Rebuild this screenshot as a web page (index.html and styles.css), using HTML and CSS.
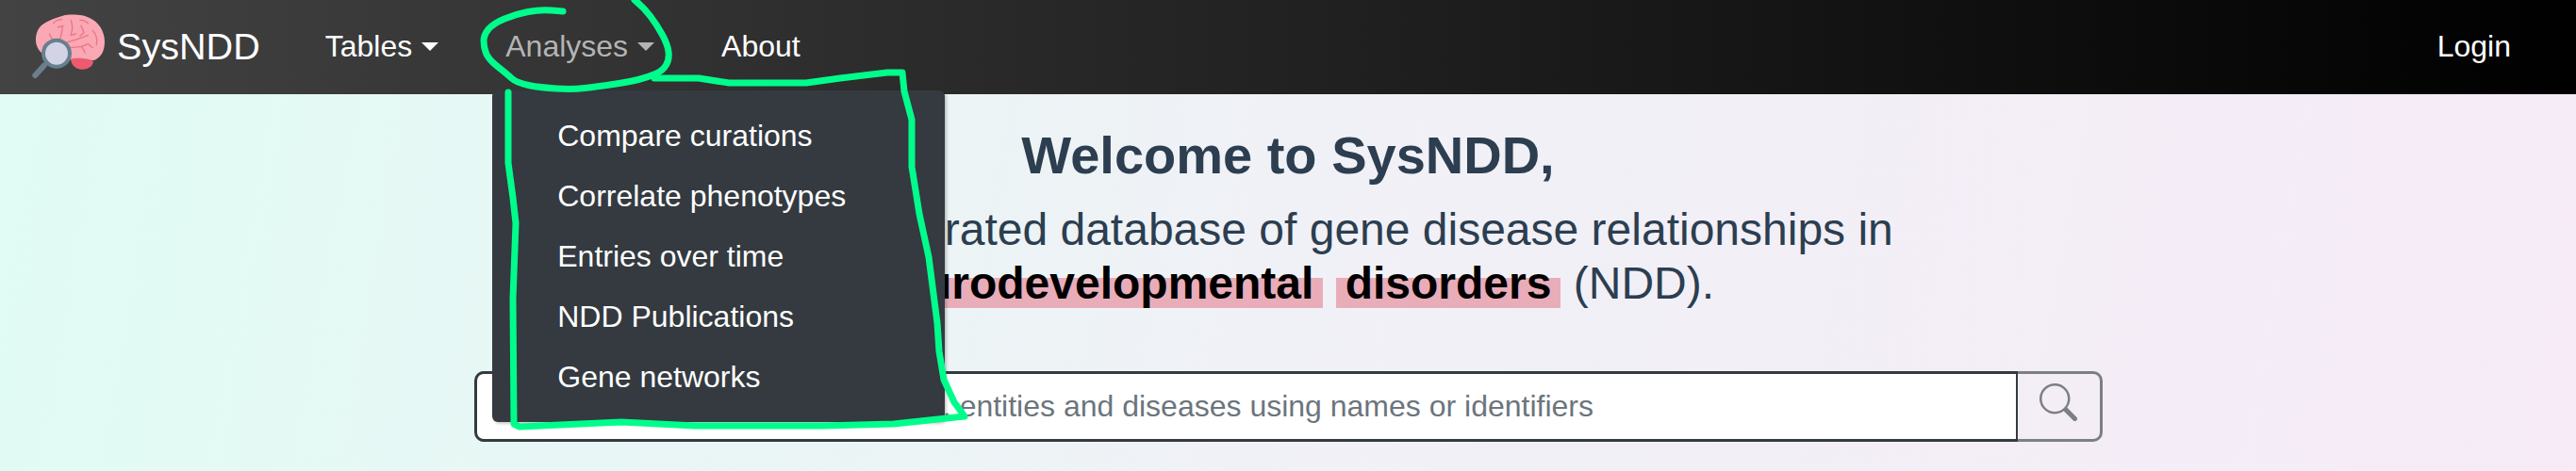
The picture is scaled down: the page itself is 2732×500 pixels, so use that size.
FILE: index.html
```html
<!DOCTYPE html>
<html>
<head>
    <title>SysNDD</title>
    <link rel="stylesheet" href="styles.css">
</head>
<body>
    <nav class="navbar">
        <a class="brand" href="#">
            <svg class="brand-logo" viewBox="0 0 297 270" width="99" height="90">
                <path d="M62 160C40 145 32 115 45 85C55 62 85 50 125 38C150 32 190 34 210 45C240 58 258 90 258 120C258 150 248 170 225 180L150 178L100 180Z" fill="#f9a8b4"/>
                <path d="M150 176C165 172 205 172 222 184C220 200 205 210 185 209C165 208 152 195 150 176Z" fill="#ee5a6f"/>
                <g class="brain-folds">
                    <path d="M95 62C103 52 112 50 122 50"/>
                    <path d="M150 52C158 70 156 85 150 100L166 96"/>
                    <path d="M180 52C190 52 198 55 205 62"/>
                    <path d="M82 96L92 115"/>
                    <path d="M110 75L125 70C122 90 120 100 115 118"/>
                    <path d="M183 70L192 92L180 102"/>
                    <path d="M220 85C232 98 236 112 232 130"/>
                    <path d="M125 126L165 115L205 100"/>
                    <path d="M150 140L185 136L205 128L220 140M185 136L196 156"/>
                </g>
                <path class="lens-handle" d="M66 196L37 228"/>
                <circle class="lens" cx="105" cy="158" r="42"/>
            </svg>
            <span>SysNDD</span>
        </a>
        <a class="nav-link caret" href="#">Tables</a>
        <div class="nav-item">
            <a class="nav-link caret muted" href="#">Analyses</a>
            <ul class="dropdown">
                <li>Compare curations</li>
                <li>Correlate phenotypes</li>
                <li>Entries over time</li>
                <li>NDD Publications</li>
                <li>Gene networks</li>
            </ul>
        </div>
        <a class="nav-link" href="#">About</a>
        <a class="nav-link login" href="#">Login</a>
    </nav>

    <main class="content">
        <h1>Welcome to SysNDD,</h1>
        <p class="lead">the expert curated database of gene disease relationships in<br>
            <mark>neurodevelopmental</mark> <mark>disorders</mark> (NDD).</p>
        <form class="search">
            <input type="text" placeholder="Search the SysNDD-db by genes, entities and diseases using names or identifiers">
            <button type="button">
                <svg viewBox="0 0 16 16" width="40" height="40" fill="#7c7f84">
                    <path d="M11.742 10.344a6.5 6.5 0 1 0-1.397 1.398h-.001c.03.04.062.078.098.115l3.85 3.85a1 1 0 0 0 1.415-1.414l-3.85-3.85a1.007 1.007 0 0 0-.115-.1zM12 6.5a5.5 5.5 0 1 1-11 0 5.5 5.5 0 0 1 11 0z"/>
                </svg>
            </button>
        </form>
    </main>

    <svg class="scribble" width="2732" height="500" viewBox="0 0 2732 500">
        <path d="M597 12L585 11Q573 10 560 12.5Q547 15 535 20Q523 25 518 31Q513 37 513 43.5Q513 50 515.5 56.5Q518 63 527.5 70.5Q537 78 542.5 83Q548 88 560.5 90.5Q573 93 590 94Q607 95 620 93.5Q633 92 650 89.5Q667 87 677 84.5Q687 82 695 78.5Q703 75 706.5 69Q710 63 709 55Q708 47 702.5 37Q697 27 690 17.5Q683 8 673 0"/>
        <path d="M539 98L539 173L544 210L547 237L544 317L545 450L551 453L659 448L737 452L873 452L948 450L1023 442L1012 427L1001 403L996 373L994 343L985 273L975 227L967 177L967 127L959 97L957 77L941 77L891 83L855 88L773 88L741 83L694 83"/>
    </svg>
</body>
</html>
```

FILE: styles.css
```css
* {
    box-sizing: border-box;
}
body {
    margin: 0;
    height: 500px;
    overflow: hidden;
    font-family: "Liberation Sans", Arial, sans-serif;
    background: linear-gradient(100deg, #e0fcf4 0%, #f0f1f6 50%, #f6ebf7 100%);
}
.navbar {
    display: flex;
    align-items: center;
    height: 100px;
    padding: 0 0 2px 25px;
    background: linear-gradient(to right, #434343 0%, #000 100%);
}
.brand {
    display: flex;
    align-items: center;
    margin-right: 69px;
    color: #fff;
    font-size: 39.6px;
    text-decoration: none;
}
.brain-folds {
    fill: none;
    stroke: #ef7484;
    stroke-width: 4;
    stroke-linecap: round;
    stroke-linejoin: round;
}
.lens-handle {
    fill: none;
    stroke: #6b7f8b;
    stroke-width: 18;
    stroke-linecap: round;
}
.lens {
    fill: #d3d3e6;
    stroke: #66808e;
    stroke-width: 12;
}
.nav-item {
    position: relative;
}
.nav-link {
    display: block;
    color: #fff;
    font-size: 32px;
    text-decoration: none;
}
.nav-link.muted {
    color: #b4b4b4;
}
.caret {
    margin-right: 71px;
}
.caret::after {
    content: "";
    display: inline-block;
    margin-left: 10px;
    vertical-align: 6px;
    border-top: 9px solid;
    border-left: 9px solid transparent;
    border-right: 9px solid transparent;
}
.login {
    margin-left: auto;
    margin-right: 69px;
}
.dropdown {
    position: absolute;
    top: 65px;
    left: -14px;
    width: 480px;
    height: 352px;
    margin: 0;
    padding: 16px 0 0 69px;
    list-style: none;
    color: #fff;
    font-size: 32px;
    background: #343a40;
    border-radius: 6px;
    box-shadow: 2px 2px 3px rgba(0, 0, 0, 0.2);
}
.dropdown li {
    height: 64px;
    line-height: 64px;
}
.content {
    text-align: center;
    color: #2c3e50;
}
h1 {
    margin: 31px 0 0;
    font-size: 56px;
    line-height: 68px;
}
.lead {
    margin: 16px 0 0;
    font-size: 48px;
    line-height: 57px;
}
mark {
    padding: 0 10px;
    color: #000;
    font-weight: bold;
    background: linear-gradient(transparent 40%, #e9adb9 40%);
}
.search {
    display: flex;
    width: 1727px;
    height: 75px;
    margin: 65px auto 0;
}
.search input {
    flex: 1;
    padding: 0 23px;
    font: 32px "Liberation Sans", Arial, sans-serif;
    background: #fff;
    border: 3px solid #343a40;
    border-right-width: 2px;
    border-radius: 10px 0 0 10px;
}
.search input::placeholder {
    color: #6c757d;
}
.search button {
    width: 90px;
    padding: 0 0 6px;
    background: transparent;
    border: 3px solid #7c7f84;
    border-left: none;
    border-radius: 0 10px 10px 0;
}
.scribble {
    position: absolute;
    top: 0;
    left: 0;
    fill: none;
    stroke: #00fd8c;
    stroke-width: 7;
    stroke-linecap: round;
    stroke-linejoin: round;
}
```
